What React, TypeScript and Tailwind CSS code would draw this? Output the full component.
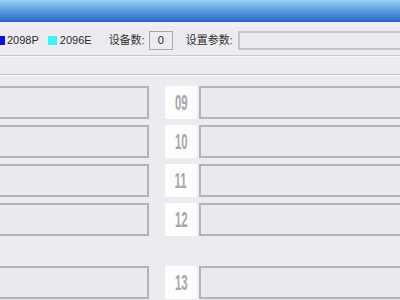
import React from "react";

const font = { fontFamily: '"Liberation Sans", "Noto Sans CJK SC", Arial, sans-serif' };

function Row({ n }: { n: string }) {
  return (
    <div className="flex h-[33px] items-stretch">
      <div className="-ml-[20px] w-[169px] border-2 border-[#b4b3b8] bg-[#ebeaef]" />
      <div className="ml-[16px] flex w-[32px] items-center justify-center overflow-hidden bg-[#fdfdfd]">
        <span
          className="inline-block origin-center scale-x-[0.52] text-[22px] font-bold leading-none text-[#a6a6aa]"
          style={font}
        >
          {n}
        </span>
      </div>
      <div className="ml-[2px] flex-1 border-2 border-r-0 border-[#b4b3b8] bg-[#ebeaef]" />
    </div>
  );
}

export default function App() {
  return (
    <div className="h-[300px] w-[400px] overflow-hidden bg-[#ecebf0]" style={font}>
      <div className="h-[22px] bg-gradient-to-b from-[#9ad0f5] via-[#5a9ce2] to-[#2a64c4]" />
      <div className="h-[4px] bg-[#f1eff6]" />
      <div className="flex h-[29px] items-center text-[11px] text-[#2a2a2a]">
        <div className="-ml-[4px] h-[9px] w-[9px] bg-[#0a10e0]" />
        <span className="ml-[2px]">2098P</span>
        <div className="ml-[9px] h-[9px] w-[9px] bg-[#38f4f4]" />
        <span className="ml-[3px]">2096E</span>
        <span className="ml-[17px] text-[#333]">设备数:</span>
        <div className="ml-[4px] flex h-[19px] w-[24px] items-center justify-center border border-[#a8a8ac] bg-[#ecebf0]">
          0
        </div>
        <span className="ml-[13px] text-[#333]">设置参数:</span>
        <div className="ml-[5px] h-[19px] flex-1 border-2 border-r-0 border-[#c4c3c8] bg-[#ecebf0]" />
      </div>
      <div className="h-[1px] bg-[#c9c8cd]" />
      <div className="h-[1px] bg-[#f8f8fb]" />
      <div className="h-[17px]" />
      <div className="h-[1px] bg-[#c2c1c6]" />
      <div className="h-[1px] bg-[#f8f8fb]" />
      <div className="h-[10px]" />
      <div className="flex flex-col gap-[6px]">
        <Row n="09" />
        <Row n="10" />
        <Row n="11" />
        <Row n="12" />
      </div>
      <div className="h-[30px]" />
      <Row n="13" />
    </div>
  );
}
